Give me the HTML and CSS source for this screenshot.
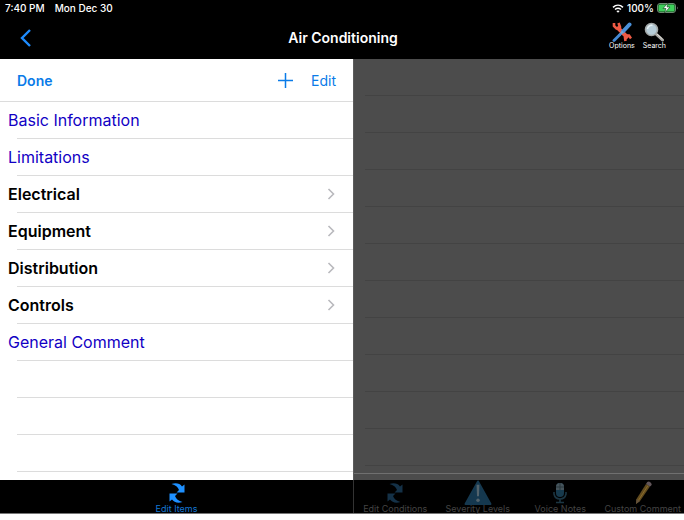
FILE: index.html
```html
<!doctype html>
<html lang="en">
  <head>
    <meta charset="UTF-8" />
    <meta name="viewport" content="width=device-width, initial-scale=1.0" />
    <title>Air Conditioning</title>
    <link rel="stylesheet" href="styles.css">
  </head>
  <body>
    <svg class="defs" aria-hidden="true">
      <symbol id="swap" viewBox="0 0 16 20">
        <path d="M2.500 1C7-.5 11 .5 13 3.500L15.500 1.500V9.500H7.500L10 7C9 4 6.500 2 2.500 1z" />
        <path d="M13.500 19C9 20.500 5 19.500 3 16.500L.5 18.500V10.500H8.500L6 13C7 16 9.500 18 13.500 19z" />
      </symbol>
      <symbol id="chevron" viewBox="0 0 8 12">
        <path d="M1.5 1l5 5-5 5" fill="none" stroke="#b9b9bd" stroke-width="1.6" />
      </symbol>
    </svg>

    <div class="app">
      <div class="status">
        <span>7:40 PM</span>
        <span>Mon Dec 30</span>
        <span class="status-right">
          <svg width="12" height="9" viewBox="0 0 12 9" aria-hidden="true">
            <path d="M1 3.4c3-2.8 7-2.8 10 0M3 5.5c2-1.7 4-1.7 6 0" fill="none" stroke="#fff" stroke-width="1.5" />
            <path d="M4.3 7q1.7-1.2 3.4 0L6 8.8z" fill="#fff" />
          </svg>
          100%
          <svg width="22" height="10" viewBox="0 0 22 10" aria-hidden="true">
            <rect x=".5" y=".5" width="18" height="9" rx="2.5" fill="#123d1b" stroke="#6d8a72" />
            <rect x="1.5" y="1.5" width="16" height="7" rx="1.5" fill="#3fce5b" />
            <path d="M20 3.5v3q1.5-1.5 0-3z" fill="#8a8a8a" />
            <path d="M11 0L6 5.5h3L7.5 10l5.5-6H10z" fill="#fff" stroke="#123d1b" stroke-width=".6" />
          </svg>
        </span>
      </div>

      <header class="navbar">
        <button class="back" aria-label="Back">
          <svg width="12" height="20" viewBox="0 0 12 20" aria-hidden="true">
            <path d="M10 2l-8 8 8 8" fill="none" stroke="#1e8cff" stroke-width="2.4" />
          </svg>
        </button>
        <h1>Air Conditioning</h1>
        <div class="tools">
          <button class="tool">
            <svg width="20" height="20" viewBox="0 0 20 20" aria-hidden="true">
              <path d="M5 5l11 11" stroke="#ee5a44" stroke-width="4" />
              <path d="M2 1v3l2.5 2.5H7L8 5 6.500 1" fill="none" stroke="#ee5a44" stroke-width="2.6" />
              <path d="M13.500 19l-.5-3.500 2-2h2l2 3" fill="none" stroke="#ee5a44" stroke-width="2.6" />
              <path d="M17.500 2.500L11 9.500" stroke="#4a90d9" stroke-width="4" stroke-linecap="round" />
              <path d="M11 9.500L7 13.500" stroke="#7fa8cf" stroke-width="2.4" />
              <path d="M8 12.500l-6 6" stroke="#4389d4" stroke-width="2.8" stroke-linecap="round" />
            </svg>
            Options
          </button>
          <button class="tool">
            <svg width="20" height="20" viewBox="0 0 20 20" aria-hidden="true">
              <path d="M12 12l6.5 6" stroke="#aaa9a6" stroke-width="3" stroke-linecap="round" />
              <path d="M13 12l5.5 5" stroke="#e1dfda" stroke-width="1" />
              <circle cx="7.5" cy="7.5" r="6" fill="#b7cdd8" stroke="#a3a8a8" stroke-width="1.6" />
              <path d="M3.5 7a4 4 0 0 1 5-3.5" fill="none" stroke="#e6f2f6" stroke-width="1.5" />
            </svg>
            Search
          </button>
        </div>
      </header>

      <main class="split">
        <section class="panel">
          <div class="toolbar">
            <button class="done">Done</button>
            <button class="add" aria-label="Add">
              <svg width="15" height="15" viewBox="0 0 15 15" aria-hidden="true">
                <path d="M7.5 0v15M0 7.5h15" stroke="#0a7be8" stroke-width="1.5" />
              </svg>
            </button>
            <button>Edit</button>
          </div>
          <ul class="rows">
            <li><a class="item" href="#">Basic Information</a></li>
            <li><a class="item" href="#">Limitations</a></li>
            <li><a class="item group" href="#">Electrical<svg class="chevron" aria-hidden="true"><use href="#chevron" /></svg></a></li>
            <li><a class="item group" href="#">Equipment<svg class="chevron" aria-hidden="true"><use href="#chevron" /></svg></a></li>
            <li><a class="item group" href="#">Distribution<svg class="chevron" aria-hidden="true"><use href="#chevron" /></svg></a></li>
            <li><a class="item group" href="#">Controls<svg class="chevron" aria-hidden="true"><use href="#chevron" /></svg></a></li>
            <li><a class="item" href="#">General Comment</a></li>
            <li></li>
            <li></li>
            <li></li>
          </ul>
        </section>
        <section class="panel dimmed">
          <ul class="rows">
            <li></li>
            <li></li>
            <li></li>
            <li></li>
            <li></li>
            <li></li>
            <li></li>
            <li></li>
            <li></li>
            <li></li>
            <li></li>
          </ul>
        </section>
      </main>

      <nav class="tabs">
        <div class="tab-group">
          <button class="tab active">
            <svg class="swap" aria-hidden="true"><use href="#swap" /></svg>
            Edit Items
          </button>
        </div>
        <div class="tab-group dimmed-tabs">
          <button class="tab">
            <svg class="swap" aria-hidden="true"><use href="#swap" /></svg>
            Edit Conditions
          </button>
          <button class="tab">
            <svg width="28" height="25" viewBox="0 0 28 26" aria-hidden="true">
              <path d="M14 1.5L27 25H1z" fill="#15384f" stroke="#15384f" stroke-width="2" stroke-linejoin="round" />
              <path d="M12.5 5h3L15 17h-2z" fill="#53636c" />
              <circle cx="14" cy="21" r="1.8" fill="#53636c" />
            </svg>
            Severity Levels
          </button>
          <button class="tab">
            <svg width="16" height="22" viewBox="0 0 16 22" aria-hidden="true">
              <path d="M2 10v2q1 5 6 5t6-5v-2M8 17v3M4 20.5h8" fill="none" stroke="#1b3542" stroke-width="1.6" />
              <rect x="4" y="1" width="8" height="14" rx="4" fill="#16394c" />
              <path d="M4 8V5a4 4 0 0 1 8 0v3z" fill="#46545b" />
              <path d="M8 1v7M4 5h8" stroke="#29363d" />
            </svg>
            Voice Notes
          </button>
          <button class="tab">
            <svg width="18" height="24" viewBox="0 0 18 24" aria-hidden="true">
              <path d="M12 3l4 2.5L6 20l-4 3 .5-5z" fill="#624b1e" />
              <path d="M14 4.5L4 20" stroke="#8a6c2b" />
              <path d="M2 23l.5-5L6 20z" fill="#64523c" />
              <path d="M12 3q2-4 4.5-1.5T16 5.5z" fill="#62565a" />
            </svg>
            Custom Comment
          </button>
        </div>
      </nav>
    </div>
  </body>
</html>
```
FILE: styles.css
```css
* {
  box-sizing: border-box;
}

body {
  margin: 0;
  background: #fff;
  font-family: Inter, "Liberation Sans", sans-serif;
  font-size: 16px;
}

.defs {
  display: none;
}

svg {
  display: block;
  flex: none;
}

button {
  padding: 0;
  border: 0;
  background: none;
  color: inherit;
  font: inherit;
  cursor: pointer;
}

.app {
  display: flex;
  flex-direction: column;
  min-height: calc(100vh - 6px);
  background: #000;
  border-bottom: 1px solid #777;
}

.status {
  display: flex;
  gap: 10px;
  padding: 0 5px;
  color: #fff;
  font-size: 10px;
  font-weight: 500;
  line-height: 16px;
}

.status-right {
  display: flex;
  align-items: center;
  gap: 3px;
  margin-left: auto;
}

.navbar {
  display: grid;
  grid-template-columns: 1fr auto 1fr;
  align-items: center;
  height: 43px;
  padding: 0 18px 0 20px;
  color: #fff;
}

.navbar h1 {
  margin: 0;
  font-size: 14px;
  font-weight: 600;
}

.back {
  justify-self: start;
}

.tools {
  display: flex;
  justify-content: flex-end;
  gap: 8px;
}

.tool {
  display: flex;
  flex-direction: column;
  align-items: center;
  padding-bottom: 4px;
  font-size: 7px;
  line-height: 8px;
}

.split {
  flex: 1;
  display: grid;
  grid-template-columns: 353fr 331fr;
}

.panel {
  background: #fff;
}

.toolbar {
  display: flex;
  align-items: center;
  gap: 18px;
  height: 43px;
  padding: 0 17px;
  border-bottom: 1px solid #dcdcdc;
  color: #0a7be8;
  font-size: 14px;
}

.done {
  margin-right: auto;
  font-weight: 600;
}

.rows {
  margin: 0;
  padding: 0;
  list-style: none;
}

.rows li {
  height: 37px;
  background: linear-gradient(#dcdcdc, #dcdcdc) 17px 100% / 100% 1px no-repeat;
}

.item {
  display: flex;
  align-items: center;
  justify-content: space-between;
  height: 100%;
  padding: 0 18px 1px 8px;
  color: #1200c4;
  text-decoration: none;
}

.group {
  color: #000;
  font-weight: 600;
}

.chevron {
  width: 8px;
  height: 12px;
}

.dimmed {
  display: flex;
  flex-direction: column;
  justify-content: space-between;
  background: #4c4c4c;
  border-left: 1px solid #5c5c5c;
}

.dimmed::after {
  content: "";
  height: 6px;
  border-top: 1px solid #707070;
}

.dimmed .rows li {
  background: linear-gradient(#434343, #434343) 11px 100% / 100% 1px no-repeat;
}

.tabs {
  display: grid;
  grid-template-columns: 353fr 331fr;
}

.tab-group {
  display: flex;
}

.tab {
  flex: 1;
  display: flex;
  flex-direction: column;
  align-items: center;
  height: 33px;
  color: #444;
  font-size: 9px;
  line-height: 8px;
  white-space: nowrap;
}

.tab svg {
  margin: auto;
}

.swap {
  width: 16px;
  height: 20px;
  fill: #143147;
}

.active {
  color: #1477d4;
}

.active .swap {
  fill: #1e90ff;
}

.dimmed-tabs {
  border-left: 1px solid #333;
}
```
